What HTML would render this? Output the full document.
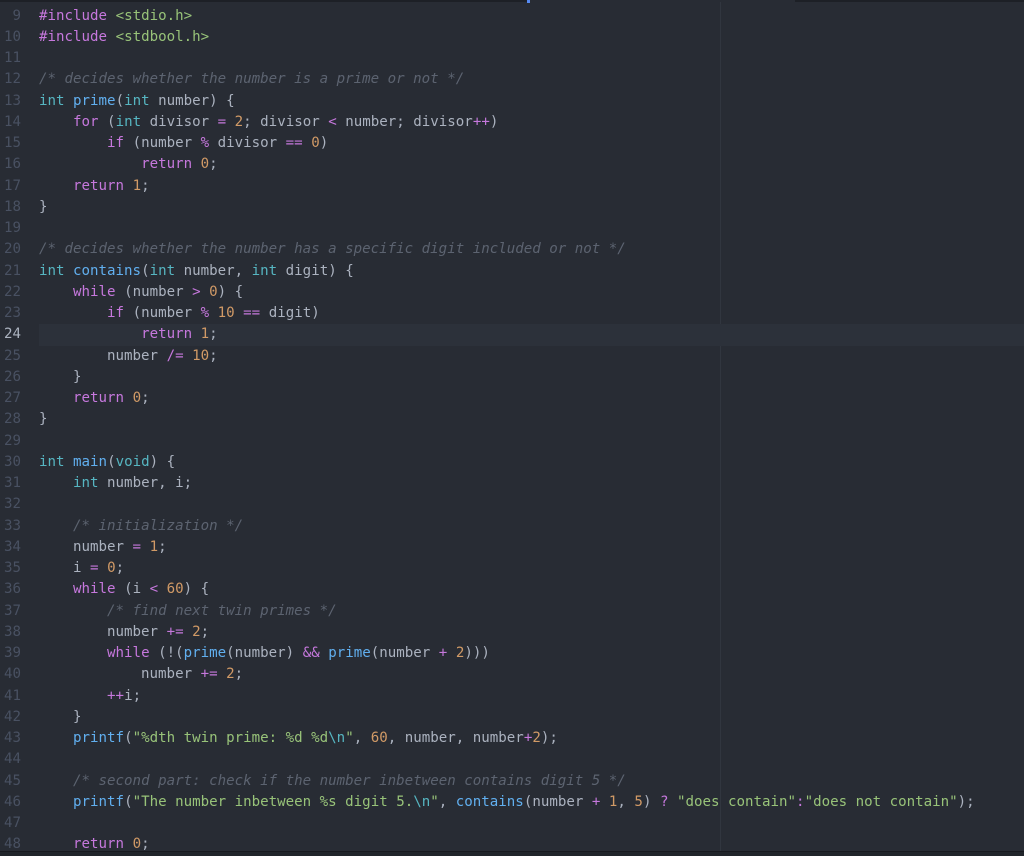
<!DOCTYPE html>
<html><head><meta charset="utf-8"><style>
html,body{margin:0;padding:0;background:#282c34;width:1024px;height:856px;overflow:hidden;position:relative}
.code{position:absolute;left:0;top:5.5px;width:1024px;font-family:"DejaVu Sans Mono","Liberation Mono",monospace;font-size:14.14px;line-height:21.25px;color:#abb2bf}
.l{position:relative;height:21.25px;white-space:pre}
.n{position:absolute;left:0;width:21px;text-align:right;color:#495162}
.t{position:absolute;left:39px}
.hlb{position:absolute;left:39px;right:0;top:0;bottom:0;background:#2c313a}
.k{color:#c678dd}.ty{color:#56b6c2}.f{color:#61afef}.num{color:#d19a66}.s{color:#98c379}.c{color:#5c6370;font-style:italic}.o{color:#c678dd}.e{color:#56b6c2}
</style></head><body>
<div style="position:absolute;left:0;top:0;width:529px;height:2px;background:#1d2026"></div>
<div style="position:absolute;left:527px;top:0;width:3px;height:3px;background:#568af2"></div>
<div style="position:absolute;left:795px;top:0;width:229px;height:2px;background:#1d2026"></div>
<div style="position:absolute;left:720px;top:2px;width:1px;height:850px;background:#31363f"></div>
<div class="code"><div class="l"><span class="n">9</span><span class="t"><span class="k">#include</span> <span class="s">&lt;stdio.h&gt;</span></span></div><div class="l"><span class="n">10</span><span class="t"><span class="k">#include</span> <span class="s">&lt;stdbool.h&gt;</span></span></div><div class="l"><span class="n">11</span></div><div class="l"><span class="n">12</span><span class="t"><span class="c">/* decides whether the number is a prime or not */</span></span></div><div class="l"><span class="n">13</span><span class="t"><span class="ty">int</span> <span class="f">prime</span>(<span class="ty">int</span> number) {</span></div><div class="l"><span class="n">14</span><span class="t">    <span class="k">for</span> (<span class="ty">int</span> divisor <span class="o">=</span> <span class="num">2</span>; divisor <span class="o">&lt;</span> number; divisor<span class="o">++</span>)</span></div><div class="l"><span class="n">15</span><span class="t">        <span class="k">if</span> (number <span class="o">%</span> divisor <span class="o">==</span> <span class="num">0</span>)</span></div><div class="l"><span class="n">16</span><span class="t">            <span class="k">return</span> <span class="num">0</span>;</span></div><div class="l"><span class="n">17</span><span class="t">    <span class="k">return</span> <span class="num">1</span>;</span></div><div class="l"><span class="n">18</span><span class="t">}</span></div><div class="l"><span class="n">19</span></div><div class="l"><span class="n">20</span><span class="t"><span class="c">/* decides whether the number has a specific digit included or not */</span></span></div><div class="l"><span class="n">21</span><span class="t"><span class="ty">int</span> <span class="f">contains</span>(<span class="ty">int</span> number, <span class="ty">int</span> digit) {</span></div><div class="l"><span class="n">22</span><span class="t">    <span class="k">while</span> (number <span class="o">&gt;</span> <span class="num">0</span>) {</span></div><div class="l"><span class="n">23</span><span class="t">        <span class="k">if</span> (number <span class="o">%</span> <span class="num">10</span> <span class="o">==</span> digit)</span></div><div class="l"><div class="hlb"></div><span class="n" style="color:#abb2bf">24</span><span class="t">            <span class="k">return</span> <span class="num">1</span>;</span></div><div class="l"><span class="n">25</span><span class="t">        number <span class="o">/=</span> <span class="num">10</span>;</span></div><div class="l"><span class="n">26</span><span class="t">    }</span></div><div class="l"><span class="n">27</span><span class="t">    <span class="k">return</span> <span class="num">0</span>;</span></div><div class="l"><span class="n">28</span><span class="t">}</span></div><div class="l"><span class="n">29</span></div><div class="l"><span class="n">30</span><span class="t"><span class="ty">int</span> <span class="f">main</span>(<span class="ty">void</span>) {</span></div><div class="l"><span class="n">31</span><span class="t">    <span class="ty">int</span> number, i;</span></div><div class="l"><span class="n">32</span></div><div class="l"><span class="n">33</span><span class="t">    <span class="c">/* initialization */</span></span></div><div class="l"><span class="n">34</span><span class="t">    number <span class="o">=</span> <span class="num">1</span>;</span></div><div class="l"><span class="n">35</span><span class="t">    i <span class="o">=</span> <span class="num">0</span>;</span></div><div class="l"><span class="n">36</span><span class="t">    <span class="k">while</span> (i <span class="o">&lt;</span> <span class="num">60</span>) {</span></div><div class="l"><span class="n">37</span><span class="t">        <span class="c">/* find next twin primes */</span></span></div><div class="l"><span class="n">38</span><span class="t">        number <span class="o">+=</span> <span class="num">2</span>;</span></div><div class="l"><span class="n">39</span><span class="t">        <span class="k">while</span> (!(<span class="f">prime</span>(number) <span class="o">&amp;&amp;</span> <span class="f">prime</span>(number <span class="o">+</span> <span class="num">2</span>)))</span></div><div class="l"><span class="n">40</span><span class="t">            number <span class="o">+=</span> <span class="num">2</span>;</span></div><div class="l"><span class="n">41</span><span class="t">        <span class="o">++</span>i;</span></div><div class="l"><span class="n">42</span><span class="t">    }</span></div><div class="l"><span class="n">43</span><span class="t">    <span class="f">printf</span>(<span class="s">"%dth twin prime: %d %d<span class="e">\n</span>"</span>, <span class="num">60</span>, number, number<span class="o">+</span><span class="num">2</span>);</span></div><div class="l"><span class="n">44</span></div><div class="l"><span class="n">45</span><span class="t">    <span class="c">/* second part: check if the number inbetween contains digit 5 */</span></span></div><div class="l"><span class="n">46</span><span class="t">    <span class="f">printf</span>(<span class="s">"The number inbetween %s digit 5.<span class="e">\n</span>"</span>, <span class="f">contains</span>(number <span class="o">+</span> <span class="num">1</span>, <span class="num">5</span>) <span class="o">?</span> <span class="s">"does contain"</span><span class="o">:</span><span class="s">"does not contain"</span>);</span></div><div class="l"><span class="n">47</span></div><div class="l"><span class="n">48</span><span class="t">    <span class="k">return</span> <span class="num">0</span>;</span></div></div>
<div style="position:absolute;left:0;top:851px;width:1024px;height:5px;background:#21252b;border-top:1px solid #181a1f"></div>
</body></html>
